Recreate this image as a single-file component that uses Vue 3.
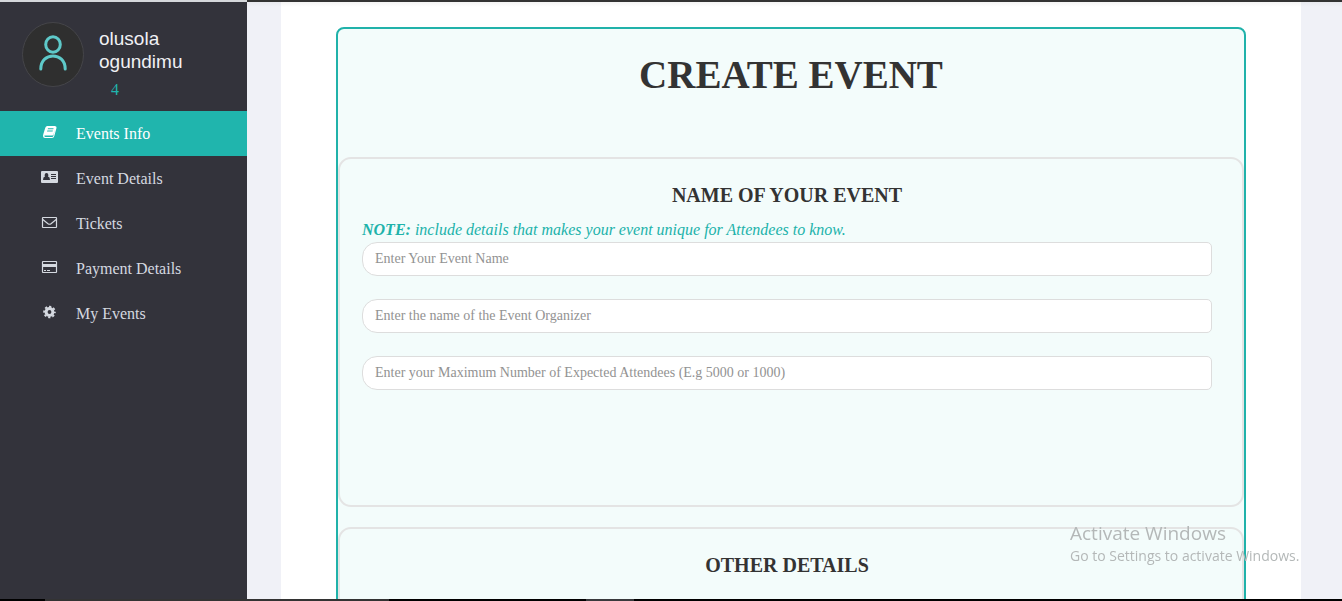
<script setup>
import { ref } from 'vue'

const items = [
  { label: 'Events Info', icon: 'book' },
  { label: 'Event Details', icon: 'idcard' },
  { label: 'Tickets', icon: 'mail' },
  { label: 'Payment Details', icon: 'credit' },
  { label: 'My Events', icon: 'gear' },
]
const active = ref(0)

const fields = [
  { id: 'event-name', placeholder: 'Enter Your Event Name' },
  { id: 'event-organizer', placeholder: 'Enter the name of the Event Organizer' },
  { id: 'event-attendees', placeholder: 'Enter your Maximum Number of Expected Attendees (E.g 5000 or 1000)' },
]
const values = ref({})
</script>

<template>
  <div class="app">
    <div class="topbar"><span class="topbar-light"></span></div>
    <div class="body">
      <aside class="sidebar">
        <div class="profile">
          <svg class="avatar" viewBox="0 0 62 65" aria-hidden="true">
            <ellipse cx="31" cy="32.5" rx="30.5" ry="32" fill="#2f2f2f" stroke="#454549" />
            <g fill="none" stroke="#5ec9c9" stroke-width="3" stroke-linecap="round">
              <ellipse cx="31" cy="22.5" rx="7.3" ry="7.8" />
              <path d="M18.800 47 C18.800 29.500 43.200 29.500 43.200 47" />
            </g>
          </svg>
          <div class="who">
            <div class="name">olusola ogundimu</div>
            <div class="count">4</div>
          </div>
        </div>
        <nav class="menu">
          <a
            v-for="(item, i) in items"
            :key="item.label"
            href="#"
            class="item"
            :class="{ active: i === active }"
            @click.prevent="active = i"
          >
            <svg class="icon" viewBox="0 0 18 16" aria-hidden="true">
              <g v-if="item.icon === 'book'">
                <path fill="currentColor" fill-rule="evenodd" d="M6.300 2 H14 Q16 2.300 15.500 4 L13.300 12 Q12.900 14 11 14 H4 Q2 14 2 12 Q2 11 2.500 9.500 L4.300 3.700 Q4.800 2 6.300 2 Z M7 4.200 L6.700 5.200 H12.300 L12.600 4.200 Z M6.300 6.500 L6 7.500 H11.600 L11.900 6.500 Z M3.400 11.500 Q3.100 12.900 4.300 12.900 H11.200 Q12 12.900 12.300 11.900 L14 5.500 L12.500 10.500 Q12.200 11.500 11.200 11.500 Z" />
              </g>
              <g v-else-if="item.icon === 'idcard'">
                <path fill="currentColor" fill-rule="evenodd" d="M1 2 H16 Q17 2 17 3 V13 Q17 14 16 14 H1 Q0 14 0 13 V3 Q0 2 1 2 Z M5.500 4 A2 2.300 0 0 0 4 7.600 Q2 8 2 11 H9 Q9 8 7 7.600 A2 2.300 0 0 0 5.500 4 Z M10 5 V6 H15 V5 Z M10 7 V8 H15 V7 Z M10 9 V10 H15 V9 Z" />
              </g>
              <g v-else-if="item.icon === 'mail'" fill="none" stroke="currentColor" stroke-width="1.200">
                <rect x="1.500" y="3.500" width="14" height="10" rx="0.500" />
                <path d="M1.500 5.300 L7 9.700 Q8.500 10.800 10 9.700 L15.500 5.300" />
              </g>
              <g v-else-if="item.icon === 'credit'">
                <rect x="1.500" y="2.500" width="14" height="11" rx="0.500" fill="none" stroke="currentColor" stroke-width="1.200" />
                <path fill="currentColor" d="M1.500 5 H15.500 V8 H1.500 Z M3 11 H5 V12 H3 Z M6 11 H9 V12 H6 Z" />
              </g>
              <g v-else>
                <circle cx="8.500" cy="8" r="3.400" fill="none" stroke="currentColor" stroke-width="3" />
                <circle cx="8.500" cy="8" r="5.400" fill="none" stroke="currentColor" stroke-width="1.800" stroke-dasharray="2.240 2" stroke-dashoffset="1.120" />
              </g>
            </svg>
            <span>{{ item.label }}</span>
          </a>
        </nav>
      </aside>

      <main class="content">
        <div class="panel">
          <form class="card" @submit.prevent>
            <h1>CREATE EVENT</h1>
            <section class="group">
              <h2>NAME OF YOUR EVENT</h2>
              <p class="note"><strong>NOTE:</strong> include details that makes your event unique for Attendees to know.</p>
              <div class="fields">
                <input
                  v-for="field in fields"
                  :id="field.id"
                  :key="field.id"
                  v-model="values[field.id]"
                  type="text"
                  :placeholder="field.placeholder"
                  :aria-label="field.placeholder"
                />
              </div>
            </section>
            <section class="group">
              <h2>OTHER DETAILS</h2>
            </section>
          </form>
        </div>
      </main>
    </div>
    <div class="bottombar"><span class="black"></span><span class="dark"></span><span class="black wide"></span><span class="task"></span></div>

    <div class="watermark">
      <div class="wm-title">Activate Windows</div>
      <div class="wm-text">Go to Settings to activate Windows.</div>
    </div>
  </div>
</template>

<style>
body {
  margin: 0;
  overflow: hidden;
}
</style>

<style scoped>
* {
  box-sizing: border-box;
}
.app {
  display: flex;
  flex-direction: column;
  height: 100vh;
  background: #f0f1f7;
  color: #333;
  font-family: "Liberation Serif", "Times New Roman", serif;
}
.topbar,
.bottombar {
  display: flex;
  flex: none;
  height: 2px;
  background: #333;
}
.topbar-light {
  width: 247px;
  background: #d5d8db;
}
.bottombar {
  background: #000;
}
.black {
  width: 45px;
}
.dark {
  width: 344px;
  background: #333;
}
.wide {
  width: 197px;
}
.task {
  width: 48px;
  background: #393a3d;
}
.body {
  display: flex;
  flex: 1;
  min-height: 0;
  overflow: hidden;
}
.sidebar {
  flex: none;
  width: 247px;
  background: #33333b;
}
.profile {
  display: flex;
  gap: 15px;
  height: 109px;
  padding: 20px 40px 0 22px;
}
.avatar {
  flex: none;
  width: 62px;
  height: 65px;
}
.who {
  padding-top: 5px;
}
.name {
  font-family: "Liberation Sans", Arial, sans-serif;
  font-size: 19px;
  line-height: 23px;
  color: #f0f0f4;
}
.count {
  padding-left: 12px;
  font-size: 16px;
  line-height: 34px;
  color: #20b5ad;
}
.item {
  display: flex;
  align-items: center;
  gap: 17px;
  height: 45px;
  padding-left: 41px;
  color: #d5d9e0;
  font-size: 16px;
  text-decoration: none;
}
.item.active {
  background: #20b5ad;
  color: #fff;
}
.icon {
  width: 18px;
  height: 16px;
  margin-bottom: 3px;
}
.content {
  flex: 1;
  min-width: 0;
  padding: 0 41px 0 34px;
  background: linear-gradient(#e8e9ee, #f0f1f7 5px);
}
.panel {
  min-height: 100%;
  padding: 25px 55px 0;
  background: linear-gradient(#f4f4f4, #fff 5px);
}
.card {
  border: 2px solid #20b2aa;
  border-radius: 8px;
  background: #f3fcfb;
}
h1 {
  margin: 0;
  padding: 23px 0 59px;
  font-size: 39px;
  line-height: 46px;
  text-align: center;
}
.group {
  min-height: 350px;
  margin-bottom: 20px;
  padding: 22px 30px 0 22px;
  border: 2px solid #e4e4e4;
  border-radius: 13px;
}
h2 {
  margin: 0;
  font-size: 20px;
  line-height: 28px;
  text-align: center;
}
.note {
  margin: 10px 0 2px;
  color: #20b2aa;
  font-size: 16px;
  font-style: italic;
  line-height: 21px;
}
.fields {
  display: flex;
  flex-direction: column;
  gap: 23px;
}
input {
  width: 100%;
  height: 34px;
  padding: 0 12px;
  border: 1px solid #ddd;
  border-radius: 15px 5px 5px 15px;
  background: #fff;
  color: #555;
  font-family: inherit;
  font-size: 14px;
  outline: none;
}
input::placeholder {
  color: #929292;
  opacity: 1;
}
.watermark {
  position: fixed;
  right: 36px;
  bottom: 35px;
  min-width: 236px;
  color: #b4b8b8;
  font-family: "Open Sans", "Segoe UI", sans-serif;
  pointer-events: none;
}
.wm-title {
  font-size: 19px;
  line-height: 24px;
}
.wm-text {
  font-size: 14px;
  line-height: 21px;
}
</style>
